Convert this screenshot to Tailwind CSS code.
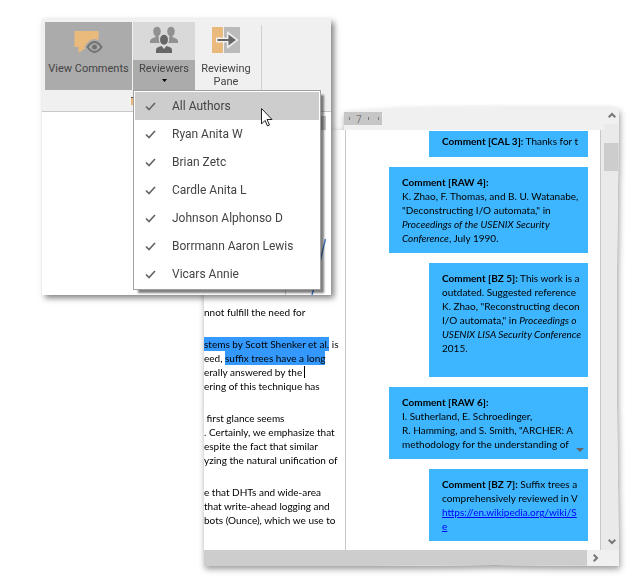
<!DOCTYPE html>
<html lang="en">
<head>
<meta charset="utf-8">
<meta name="viewport" content="width=device-width, initial-scale=1">
<title>Reviewing comments</title>
<script src="https://cdn.jsdelivr.net/npm/@tailwindcss/browser@4"></script>
</head>
<body class="bg-white">
<main class="relative min-h-screen overflow-hidden">

  <!-- Document window with the reviewing pane -->
  <div class="absolute left-[204px] right-4 top-[107px] drop-shadow-[1px_3px_3px_rgba(0,0,0,0.4)]">
    <section aria-label="Document" class="flex flex-col bg-white font-['Lato',sans-serif] text-[10px] leading-[14px] text-black [clip-path:polygon(110px_23px,140px_23px,140px_5px,200px_1px,300px_0,calc(100%_-_14px)_0,100%_2px,calc(100%_-_2px)_35%,calc(100%_-_2px)_65%,100%_100%,70%_calc(100%_-_1px),40%_100%,0_100%,0_180px,110px_180px)]">
      <div class="flex">
        <div class="min-w-0 flex-1">
          <div class="flex h-[23px] bg-[#f0f0f0] pl-[140px] pt-[5px]">
            <div class="flex h-[13px] w-[38px] items-center bg-[#c6c6c6] pl-[5px] font-['Open_Sans',sans-serif] text-[10px] text-[#777]">
              <i class="h-[3px] w-px bg-[#777]"></i><span class="ml-[6px] w-3">7</span><i class="h-[3px] w-px bg-[#777]"></i><i class="ml-[9px] h-[3px] w-px bg-[#777]"></i>
            </div>
          </div>
          <div class="flex">
            <article class="flex w-[141px] shrink-0 flex-col gap-[18px] overflow-hidden whitespace-nowrap pt-[175px]">
              <p>nnot fulfill the need for</p>
              <p><mark class="bg-[#3399ff] py-px text-black">stems by Scott Shenker et al.</mark> is<br>eed, <mark class="bg-[#3399ff] py-px text-black">suffix trees have a long</mark><br>erally answered by the <span class="ml-[2px] border-l border-black"></span><br>ering of this technique has</p>
              <p>&nbsp;first glance seems<br>. Certainly, we emphasize that<br>espite the fact that similar<br>yzing the natural unification of</p>
              <p>e that DHTs and wide-area<br>that write-ahead logging and<br>bots (Ounce), which we use to</p>
            </article>
            <div class="flex min-w-0 flex-1 flex-col items-end gap-[10px] border-x border-[#c8c8c8] pb-[9px] pr-3 pt-px">
              <div class="h-[26px] w-[159px] bg-[#3db5ff] pl-[13px] pr-1 pt-[3px]"><p class="overflow-hidden whitespace-nowrap"><b>Comment [CAL 3]:</b> Thanks for t</p></div>
              <div class="h-[86px] w-[199px] bg-[#3db5ff] pl-[13px] pr-1 pt-2"><p class="overflow-hidden whitespace-nowrap"><b>Comment [RAW 4]:</b><br>K. Zhao, F. Thomas, and B. U. Watanabe,<br>"Deconstructing I/O automata," in<br><em>Proceedings of the USENIX Security<br>Conference</em>, July 1990.</p></div>
              <div class="h-[114px] w-[159px] bg-[#3db5ff] pl-[13px] pr-1 pt-2"><p class="overflow-hidden whitespace-nowrap"><b>Comment [BZ 5]:</b> This work is a<br>outdated. Suggested reference<br>K. Zhao, "Reconstructing decon<br>I/O automata," in <em>Proceedings o<br>USENIX LISA Security Conference</em><br>2015.</p></div>
              <div class="relative h-[72px] w-[199px] bg-[#3db5ff] pl-[13px] pr-1 pt-2"><p class="overflow-hidden whitespace-nowrap"><b>Comment [RAW 6]:</b><br>I. Sutherland, E. Schroedinger,<br>R. Hamming, and S. Smith, "ARCHER: A<br>methodology for the understanding of</p>
                <svg class="absolute bottom-[7px] right-1 h-1 w-2" viewBox="0 0 8 4"><path d="M0 0h8L4 4z" fill="#666"/></svg></div>
              <div class="h-[72px] w-[159px] bg-[#3db5ff] pl-[13px] pr-1 pt-2"><p class="overflow-hidden whitespace-nowrap"><b>Comment [BZ 7]:</b> Suffix trees a<br>comprehensively reviewed in V<br><a href="#" class="text-[#0000ff] underline">https://en.wikipedia.org/wiki/S<br>e</a></p></div>
            </div>
            <div class="w-[3px] bg-[#eaeaea]"></div>
          </div>
        </div>
        <div class="flex w-[15px] flex-col bg-[#eaeaea]">
          <button aria-label="Scroll up" class="flex h-[17px] justify-center bg-[#f0f0f0] pt-[5px]"><svg class="h-[6px] w-2" viewBox="0 0 8 6" fill="none" stroke="#777" stroke-width="2"><path d="M.7 5.3 4 2l3.300 3.300"/></svg></button>
          <div class="mt-[19px] h-7 bg-[#cdcdcd]"></div>
          <button aria-label="Scroll down" class="mt-auto flex h-[17px] justify-center bg-[#eaeaea] pt-[6px]"><svg class="h-[6px] w-2" viewBox="0 0 8 6" fill="none" stroke="#777" stroke-width="2"><path d="M.7.7 4 4 7.300.7"/></svg></button>
        </div>
      </div>
      <div class="flex h-4 bg-[#f0f0f0]">
        <div class="flex-1 bg-[#cdcdcd]"></div>
        <button aria-label="Scroll right" class="mr-[15px] flex w-[17px] items-center justify-center"><svg class="h-2 w-[6px]" viewBox="0 0 6 8" fill="none" stroke="#777" stroke-width="2"><path d="M.7.7 4 4 .7 7.300"/></svg></button>
      </div>
    </section>
  </div>

  <!-- Ribbon window -->
  <section aria-label="Review ribbon" class="absolute left-[42px] top-[19px] w-[289px] bg-white font-['Roboto',sans-serif] text-[#444] shadow-[3px_3px_6px_rgba(0,0,0,0.5)]">
    <div class="flex bg-[#f0f0f0] px-[3px] pt-[3px] text-[11px] leading-[13px]">
      <button class="flex h-[68px] w-[87px] flex-col items-center bg-[#ababab]">
        <svg class="h-[40px] w-8" viewBox="0 0 32 40"><path d="M1.500 9h24v16h-11.500L5.500 31V25h-4z" fill="#eab97c"/><path d="M13 25q8.500-13 17 0-8.500 13-17 0z" fill="#ababab" stroke="#ababab" stroke-width="3"/><path d="M14.500 25q7-10 14 0-7 10-14 0z" fill="none" stroke="#727272" stroke-width="2"/><circle cx="21.500" cy="25" r="2.500" fill="#727272"/></svg>
        <span class="whitespace-nowrap">View Comments</span>
      </button>
      <div class="relative ml-px">
        <button aria-haspopup="menu" aria-expanded="true" class="flex h-[68px] w-[62px] flex-col items-center bg-[linear-gradient(#d9d9d9_38px,#ababab_38px)]">
          <svg class="h-[40px] w-8" viewBox="0 0 32 40"><g fill="#919191"><ellipse cx="9" cy="9.500" rx="3.800" ry="4.800"/><path d="M2 21v-2q0-2 3-3l2.500-1v-2h3v2l3.500 2v4z"/><ellipse cx="23" cy="9.500" rx="3.800" ry="4.800"/><path d="M30 21v-2q0-2-3-3l-2.500-1v-2h-3v2l-3.500 2v4z"/></g><path d="M16 11.500c3.500 0 5.200 2.500 5.200 6 0 2-1 4-2.200 5l4 1.500q2.500 1 2.500 4v4h-19v-4q0-3 2.500-4l4-1.500c-1.200-1-2.200-3-2.200-5 0-3.500 1.700-6 5.200-6z" fill="#d9d9d9"/><g fill="#666"><ellipse cx="16" cy="17.800" rx="4" ry="5"/><path d="M8 31v-3q0-2 2-2.800l3.500-1.200 2.500 3 2.500-3 3.500 1.200q2 .8 2 2.800v3z"/></g></svg>
          <span>Reviewers</span>
          <svg class="mt-1 h-[3px] w-[5px]" viewBox="0 0 5 3"><path d="M0 0h5L2.500 3z"/></svg>
        </button>
        <div role="menu" class="absolute left-0 top-[68px] z-10 flex w-[188px] flex-col border border-[#a0a0a0] bg-white p-px text-[12px] leading-[28px] shadow-[4px_4px_2px_-1px_rgba(0,0,0,0.5)]">
          <button role="menuitemcheckbox" aria-checked="true" class="flex h-7 items-center gap-4 bg-[#cdcdcd] pl-[10px]"><svg class="h-[9px] w-[11px]" viewBox="0 0 11 9" fill="none" stroke="#666" stroke-width="1.700"><path d="M1 4.500 4 7.500 10 1"/></svg>All Authors</button>
          <button role="menuitemcheckbox" aria-checked="true" class="flex h-7 items-center gap-4 pl-[10px]"><svg class="h-[9px] w-[11px]" viewBox="0 0 11 9" fill="none" stroke="#666" stroke-width="1.700"><path d="M1 4.500 4 7.500 10 1"/></svg>Ryan Anita W</button>
          <button role="menuitemcheckbox" aria-checked="true" class="flex h-7 items-center gap-4 pl-[10px]"><svg class="h-[9px] w-[11px]" viewBox="0 0 11 9" fill="none" stroke="#666" stroke-width="1.700"><path d="M1 4.500 4 7.500 10 1"/></svg>Brian Zetc</button>
          <button role="menuitemcheckbox" aria-checked="true" class="flex h-7 items-center gap-4 pl-[10px]"><svg class="h-[9px] w-[11px]" viewBox="0 0 11 9" fill="none" stroke="#666" stroke-width="1.700"><path d="M1 4.500 4 7.500 10 1"/></svg>Cardle Anita L</button>
          <button role="menuitemcheckbox" aria-checked="true" class="flex h-7 items-center gap-4 pl-[10px]"><svg class="h-[9px] w-[11px]" viewBox="0 0 11 9" fill="none" stroke="#666" stroke-width="1.700"><path d="M1 4.500 4 7.500 10 1"/></svg>Johnson Alphonso D</button>
          <button role="menuitemcheckbox" aria-checked="true" class="flex h-7 items-center gap-4 pl-[10px]"><svg class="h-[9px] w-[11px]" viewBox="0 0 11 9" fill="none" stroke="#666" stroke-width="1.700"><path d="M1 4.500 4 7.500 10 1"/></svg>Borrmann Aaron Lewis</button>
          <button role="menuitemcheckbox" aria-checked="true" class="flex h-7 items-center gap-4 pl-[10px]"><svg class="h-[9px] w-[11px]" viewBox="0 0 11 9" fill="none" stroke="#666" stroke-width="1.700"><path d="M1 4.500 4 7.500 10 1"/></svg>Vicars Annie</button>
        </div>
      </div>
      <button class="flex h-[68px] w-[62px] flex-col items-center">
        <svg class="h-[40px] w-8" viewBox="0 0 32 40"><path d="M2 5h11v26H2z" fill="#eab97c"/><path d="M14 5h16v26H14z" fill="#bbb"/><path d="M6 15.500h11V9l11.500 9L17 27v-6.500H6z" fill="#f0f0f0"/><path d="M7.500 17h11v-4.500L26 18l-7.500 5.500V19h-11z" fill="#666"/></svg>
        <span>Reviewing<br>Pane</span>
      </button>
      <div class="ml-1 mt-[3px] h-[65px] w-px bg-[#d0d0d0]"></div>
    </div>
    <div class="flex h-[22px] items-center border-b border-[#c8c8c8] bg-[#f0f0f0] pl-[89px]"><i class="h-2 w-[2px] border-t border-[#555] bg-[#eab97c]"></i></div>
    <div class="flex h-[183px] flex-col items-end justify-between pr-[5px] pt-1">
      <div class="h-[14px] w-[5px] bg-[#c6c6c6]"></div>
      <svg class="h-[56px] w-[42px]" viewBox="0 0 42 56" fill="none"><path d="M1.500 50v6" stroke="#c8c8c8"/><path d="M41.500 0Q37 18 35 28T28 56" stroke="#4a80cc" stroke-width="1.500"/></svg>
    </div>
  </section>

  <!-- Mouse pointer -->
  <svg class="absolute left-[261px] top-[108px] z-20 h-[19px] w-3" viewBox="0 0 12 19"><path d="M.5.500v15.500l3.500-3.500 2.500 5.500 2-1-2.500-5.500h5z" fill="#fff" stroke="#222"/></svg>
</main>
</body>
</html>
